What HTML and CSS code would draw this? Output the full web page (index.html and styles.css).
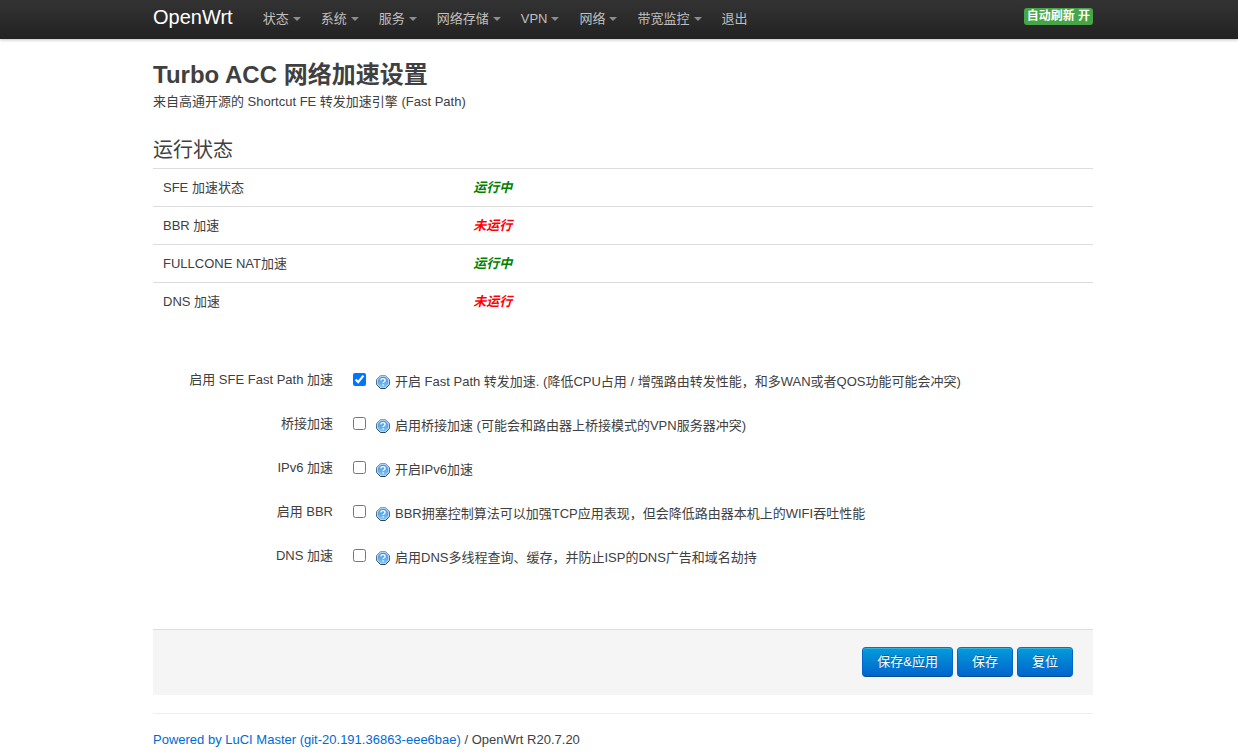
FILE: index.html
```html
<!DOCTYPE html>
<html lang="zh-CN">
<head>
<meta charset="utf-8">
<title>OpenWrt - Turbo ACC</title>
<link rel="stylesheet" href="styles.css">
</head>
<body>
<svg class="defs" width="0" height="0" aria-hidden="true">
  <defs>
    <linearGradient id="ball" x1="0" y1="0" x2="0" y2="1"><stop offset="0" stop-color="#4a8fd4"/><stop offset="1" stop-color="#7cc4f6"/></linearGradient>
    <linearGradient id="rim" x1="0" y1="0" x2="0" y2="1"><stop offset="0" stop-color="#7f9fc0"/><stop offset="1" stop-color="#2c435c"/></linearGradient>
    <symbol id="help" viewBox="0 0 14 14">
      <path d="M4.500.5h5l4 4v5l-4 4h-5l-4-4v-5z" fill="#a9d3f5" stroke="url(#rim)" stroke-linejoin="round"/>
      <path d="M4.900 2h4.200L12 4.900v4.200L9.100 12H4.900L2 9.100V4.900z" fill="url(#ball)"/>
      <path d="M4.900 5.400c0-1.100.9-1.700 2.100-1.700s2.100.6 2.100 1.700c0 1.300-2 1.300-2 2.700M7.100 9.200v1.500" fill="none" stroke="#fff" stroke-width="1.300"/>
    </symbol>
  </defs>
</svg>
<header class="topbar">
  <div class="container bar">
    <a class="brand" href="#">OpenWrt</a>
    <nav class="nav">
      <a class="menu" href="#">状态</a>
      <a class="menu" href="#">系统</a>
      <a class="menu" href="#">服务</a>
      <a class="menu" href="#">网络存储</a>
      <a class="menu" href="#">VPN</a>
      <a class="menu" href="#">网络</a>
      <a class="menu" href="#">带宽监控</a>
      <a href="#">退出</a>
    </nav>
    <button class="refresh" type="button">自动刷新 开</button>
  </div>
</header>
<main class="page">
  <div class="container">
    <h2>Turbo ACC 网络加速设置</h2>
    <p class="descr">来自高通开源的 Shortcut FE 转发加速引擎 (Fast Path)</p>
    <h3>运行状态</h3>
    <table class="status">
      <tr><th scope="row">SFE 加速状态</th><td class="on">运行中</td></tr>
      <tr><th scope="row">BBR 加速</th><td class="off">未运行</td></tr>
      <tr><th scope="row">FULLCONE NAT加速</th><td class="on">运行中</td></tr>
      <tr><th scope="row">DNS 加速</th><td class="off">未运行</td></tr>
    </table>
    <form>
      <div class="options">
        <div class="option"><label for="sfe">启用 SFE Fast Path 加速</label><input type="checkbox" id="sfe" checked><p><svg class="icon"><use href="#help"/></svg>开启 Fast Path 转发加速. (降低CPU占用 / 增强路由转发性能，和多WAN或者QOS功能可能会冲突)</p></div>
        <div class="option"><label for="bridge">桥接加速</label><input type="checkbox" id="bridge"><p><svg class="icon"><use href="#help"/></svg>启用桥接加速 (可能会和路由器上桥接模式的VPN服务器冲突)</p></div>
        <div class="option"><label for="ipv6">IPv6 加速</label><input type="checkbox" id="ipv6"><p><svg class="icon"><use href="#help"/></svg>开启IPv6加速</p></div>
        <div class="option"><label for="bbr">启用 BBR</label><input type="checkbox" id="bbr"><p><svg class="icon"><use href="#help"/></svg>BBR拥塞控制算法可以加强TCP应用表现，但会降低路由器本机上的WIFI吞吐性能</p></div>
        <div class="option"><label for="dns">DNS 加速</label><input type="checkbox" id="dns"><p><svg class="icon"><use href="#help"/></svg>启用DNS多线程查询、缓存，并防止ISP的DNS广告和域名劫持</p></div>
      </div>
      <div class="actions">
        <button type="button">保存&amp;应用</button>
        <button type="button">保存</button>
        <button type="reset">复位</button>
      </div>
    </form>
    <footer><a href="#">Powered by LuCI Master (git-20.191.36863-eee6bae)</a> / OpenWrt R20.7.20</footer>
  </div>
</main>
</body>
</html>
```

FILE: styles.css
```css
* { box-sizing: border-box; }
body {
  margin: 0;
  background: #fff;
  color: #404040;
  font: 13px/18px "Liberation Sans", Arial, "Noto Sans CJK SC", sans-serif;
}
.defs { position: absolute; }
.container { width: 100%; max-width: 940px; margin: 0 auto; }
.topbar {
  padding-left: 8px;
  background: linear-gradient(#333, #222);
  box-shadow: 0 1px 3px rgba(0, 0, 0, .25);
}
.bar { display: flex; align-items: center; min-height: 39px; padding-bottom: 2px; }
a { color: #0069d6; text-decoration: none; }
.brand { margin-right: 20px; padding-bottom: 3px; color: #fff; font-size: 20px; line-height: 24px; }
.nav { display: flex; }
.nav a { padding: 0 10px; color: #bfbfbf; white-space: nowrap; }
.menu::after {
  content: "";
  display: inline-block;
  margin-left: 4px;
  vertical-align: 2px;
  border: 4px solid transparent;
  border-top-color: #8c8c8c;
  border-bottom: 0;
}
.refresh {
  margin-left: auto;
  margin-bottom: 4px;
  padding: 0 3px;
  border: 0;
  border-radius: 3px;
  background: #46a546;
  color: #fff;
  font: bold 12px/17px "Liberation Sans", Arial, "Noto Sans CJK SC", sans-serif;
}
.page { padding: 18px 0 0 8px; }
h2 { margin: 0; font-size: 24px; line-height: 36px; }
.descr { margin: 0; }
h3 { margin: 21px 0 0; font-size: 20px; font-weight: 400; line-height: 36px; }
.status { width: 100%; border-collapse: collapse; }
.status th, .status td { padding: 10px 10px 9px; border-top: 1px solid #ddd; text-align: left; line-height: 18px; }
.status th { width: 33%; font-weight: 400; }
.status td { font-weight: 700; font-style: italic; }
.on { color: green; }
.off { color: red; }
.options { padding: 51px 0 38px; }
.option { display: grid; grid-template-columns: 180px 33px 1fr; min-height: 44px; }
.option label { text-align: right; }
.option input { width: 13px; height: 13px; margin: 2px 0 0 20px; }
.option p { margin: 2px 0 0 10px; }
.icon { width: 14px; height: 14px; margin-right: 5px; vertical-align: -3px; }
.actions { display: flex; justify-content: flex-end; gap: 4px; padding: 17px 20px 18px; border-top: 1px solid #ddd; background: #f5f5f5; }
.actions button {
  padding: 5px 14px;
  border: 1px solid;
  border-color: #0374b5 #0064cd #004b9a;
  border-radius: 4px;
  background: linear-gradient(#049cdb, #0064cd);
  box-shadow: inset 0 1px 0 rgba(255, 255, 255, .2);
  text-shadow: 0 -1px 0 rgba(0, 0, 0, .25);
  color: #fff;
  font: 13px/18px "Liberation Sans", Arial, "Noto Sans CJK SC", sans-serif;
}
footer { margin-top: 18px; padding-top: 17px; border-top: 1px solid #eee; }
```
